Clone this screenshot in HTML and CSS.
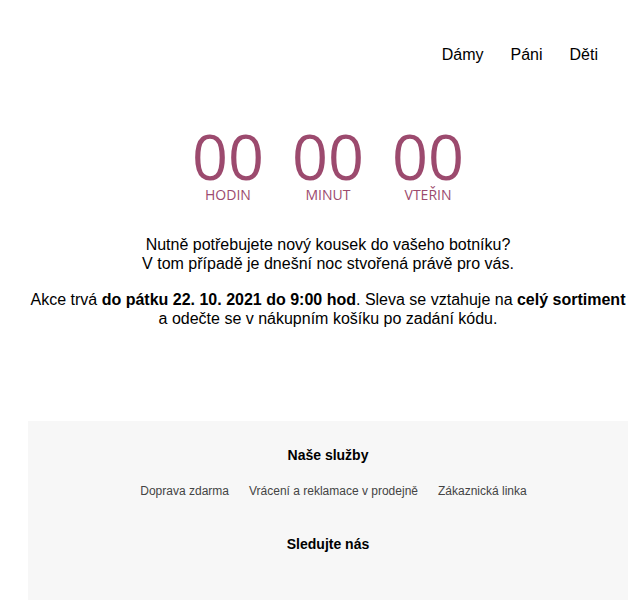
FILE: index.html
```html
<!DOCTYPE html>
<html lang="cs">
<head>
    <meta charset="UTF-8">
    <meta name="viewport" content="width=device-width, initial-scale=1.0">
    <title>Akce</title>
    <link rel="stylesheet" href="styles.css">
</head>
<body>
    <div class="page">
        <nav class="menu">
            <a href="#">Dámy</a>
            <a href="#">Páni</a>
            <a href="#">Děti</a>
        </nav>

        <div class="countdown">
            <div class="unit">
                <span class="num">00</span>
                <span class="label">Hodin</span>
            </div>
            <div class="unit">
                <span class="num">00</span>
                <span class="label">Minut</span>
            </div>
            <div class="unit">
                <span class="num">00</span>
                <span class="label">Vteřin</span>
            </div>
        </div>

        <div class="info">
            <p>Nutně potřebujete nový kousek do vašeho botníku?<br>V tom případě je dnešní noc stvořená právě pro vás.</p>
            <p>Akce trvá <b>do pátku 22. 10. 2021 do 9:00 hod</b>. Sleva se vztahuje na <b>celý sortiment</b><br>a odečte se v nákupním košíku po zadání kódu.</p>
        </div>

        <footer>
            <h3>Naše služby</h3>
            <div class="links">
                <a href="#">Doprava zdarma</a>
                <a href="#">Vrácení a reklamace v prodejně</a>
                <a href="#">Zákaznická linka</a>
            </div>
            <h3>Sledujte nás</h3>
        </footer>
    </div>
</body>
</html>
```

FILE: styles.css
```css
* {
    box-sizing: border-box;
    margin: 0;
    padding: 0;
}
body {
    font-family: "Liberation Sans", Arial, sans-serif;
    color: #000;
    background: #fff;
}
.page {
    padding-left: 16px;
}
.menu {
    display: flex;
    justify-content: flex-end;
    gap: 27px;
    padding: 45px 42px 0 0;
    font-size: 16px;
    line-height: 20px;
}
.menu a {
    color: #000;
    text-decoration: none;
}

/* odpocet */
.countdown {
    display: flex;
    justify-content: center;
    gap: 28px;
    margin-top: 61px;
    font-family: "Open Sans", sans-serif;
    color: #9c4a6e;
}
.unit {
    display: flex;
    flex-direction: column;
    align-items: center;
}
.num {
    font-size: 63px;
    line-height: 60px;
}
.label {
    font-size: 14px;
    line-height: 16px;
    text-transform: uppercase;
    margin-top: 1px;
}

.info {
    margin-top: 32px;
    text-align: center;
    font-size: 16px;
    line-height: 19px;
}
.info p + p {
    margin-top: 17px;
}

footer {
    margin: 93px 12px 0 12px;
    background: #f7f7f7;
    text-align: center;
    padding: 26px 0 80px;
}
footer h3 {
    font-size: 14px;
    line-height: 16px;
    font-weight: bold;
}
.links {
    display: flex;
    justify-content: center;
    gap: 20px;
    margin: 20px 0 37px;
    padding-left: 11px;
    font-size: 12px;
    line-height: 16px;
}
.links a {
    color: #444;
    text-decoration: none;
}
```
